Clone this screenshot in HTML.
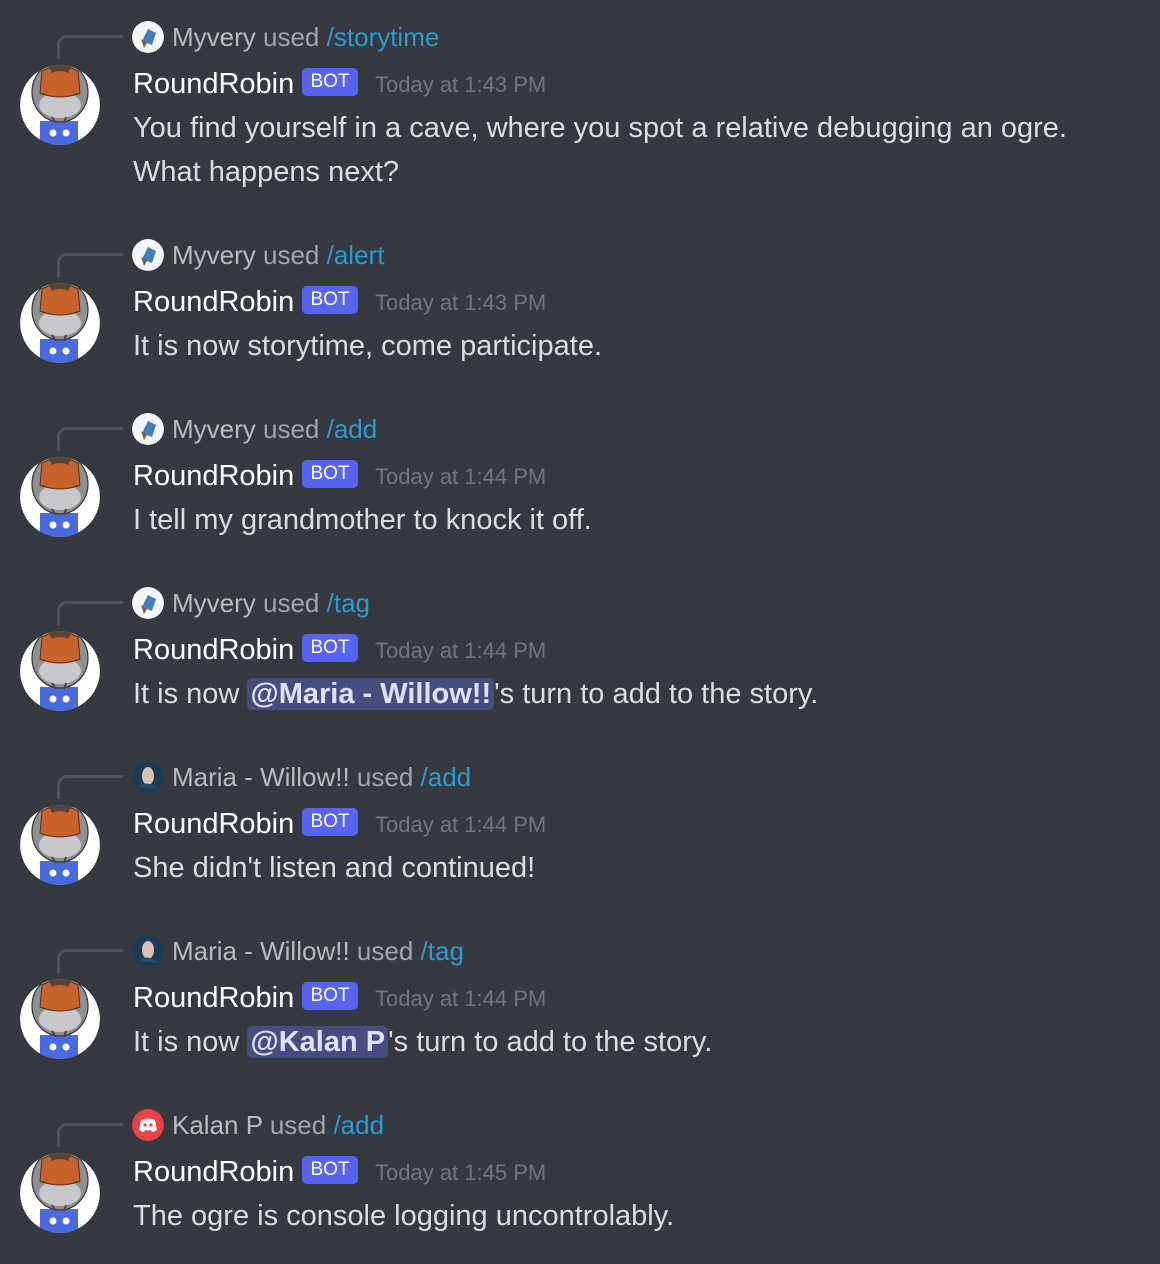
<!DOCTYPE html>
<html><head><meta charset="utf-8"><style>
body{margin:0;width:1160px;height:1264px;background:#36393f;overflow:hidden;position:relative;font-family:"Liberation Sans",sans-serif}
.b{position:absolute;left:0;width:1160px}
.sp{position:absolute;left:57px;top:-2px;width:66px;height:24px;border-left:3px solid #4f545c;border-top:3px solid #4f545c;border-top-left-radius:10px;box-sizing:border-box}
.sa{position:absolute;left:132px;top:-16px;width:32px;height:32px;border-radius:50%;overflow:hidden}
.rt{position:absolute;left:172px;top:-17px;font-size:26px;color:#b9bbbe;white-space:nowrap;line-height:34px}
.rt .c{color:#2c9bd0}
.rt .w{color:#a3a6aa}
.av{position:absolute;left:20px;top:28px;width:80px;height:80px;border-radius:50%;overflow:hidden}
.nm{position:absolute;left:133px;top:28px;font-size:29px;color:#fff;white-space:nowrap;line-height:38px}
.bot{position:absolute;left:302px;top:31px;width:56px;height:28px;background:#5865f2;border-radius:5px;color:#fff;font-size:19px;line-height:28px;text-align:center}
.ts{position:absolute;left:375px;top:33px;font-size:22px;color:#72767d;white-space:nowrap;line-height:30px}
.ct{position:absolute;left:133px;top:69px;font-size:29px;color:#dcddde;white-space:nowrap;line-height:44px}
.m{background:#484d80;color:#dee0fc;border-radius:5px;padding:0 3px;font-weight:bold;}
</style></head><body>

<svg width="0" height="0" style="position:absolute"><defs>
<clipPath id="cc"><circle cx="40" cy="40" r="40"/></clipPath>
<g id="rr"><g clip-path="url(#cc)">
<circle cx="40" cy="40" r="40" fill="#fff"/>
<rect x="20" y="56" width="38" height="26" fill="#4a6ae0"/>
<circle cx="33" cy="68" r="3.5" fill="#fff"/><circle cx="46" cy="68" r="3.5" fill="#fff"/>
<ellipse cx="40" cy="27" rx="28" ry="30" fill="#8e8f93" stroke="#333" stroke-width="1.2"/>
<ellipse cx="40" cy="40" rx="21" ry="13" fill="#c7c8cc"/>
<path d="M22 6 Q40 -4 58 6 L60 28 Q40 36 20 28 Z" fill="#c8622a" stroke="#5a2e18" stroke-width="1"/>
<path d="M28 0 L52 0 L48 8 Q40 4 32 8 Z" fill="#5b4237"/>
<path d="M32 52 L36 58 M46 52 L44 58" stroke="#5b4237" stroke-width="2"/>
</g></g>
<g id="my"><circle cx="16" cy="16" r="16" fill="#f3f5f7"/><path d="M10 20 L16 8 L24 12 L20 24 Z" fill="#3f7fbf"/><path d="M9 18 L15 22 L12 27Z" fill="#8a5a3a"/></g>
<g id="mw"><circle cx="16" cy="16" r="16" fill="#1c3a55"/><ellipse cx="16" cy="15" rx="6" ry="9" fill="#d9c0b0"/><path d="M6 26 Q16 18 26 28" fill="#234e70"/></g>
<g id="kp"><circle cx="16" cy="16" r="16" fill="#ed4245"/><path d="M9 11 Q16 8 23 11 L25 21 Q22 23 20 23 L19 21 Q16 22 13 21 L12 23 Q10 23 7 21 Z" fill="#fff"/><circle cx="13" cy="16" r="1.6" fill="#ed4245"/><circle cx="19" cy="16" r="1.6" fill="#ed4245"/></g>
</defs></svg>

<div class="b" style="top:37px"><div class="sp"></div><svg class="sa"><use href="#my"/></svg><div class="rt">Myvery <span class="w">used</span> <span class="c">/storytime</span></div>
<svg class="av" viewBox="0 0 80 80"><use href="#rr"/></svg><div class="nm">RoundRobin</div><div class="bot">BOT</div><div class="ts">Today at 1:43 PM</div>
<div class="ct">You find yourself in a cave, where you spot a relative debugging an ogre.<br>What happens next?</div></div>

<div class="b" style="top:255px"><div class="sp"></div><svg class="sa"><use href="#my"/></svg><div class="rt">Myvery <span class="w">used</span> <span class="c">/alert</span></div>
<svg class="av" viewBox="0 0 80 80"><use href="#rr"/></svg><div class="nm">RoundRobin</div><div class="bot">BOT</div><div class="ts">Today at 1:43 PM</div>
<div class="ct">It is now storytime, come participate.</div></div>

<div class="b" style="top:429px"><div class="sp"></div><svg class="sa"><use href="#my"/></svg><div class="rt">Myvery <span class="w">used</span> <span class="c">/add</span></div>
<svg class="av" viewBox="0 0 80 80"><use href="#rr"/></svg><div class="nm">RoundRobin</div><div class="bot">BOT</div><div class="ts">Today at 1:44 PM</div>
<div class="ct">I tell my grandmother to knock it off.</div></div>

<div class="b" style="top:603px"><div class="sp"></div><svg class="sa"><use href="#my"/></svg><div class="rt">Myvery <span class="w">used</span> <span class="c">/tag</span></div>
<svg class="av" viewBox="0 0 80 80"><use href="#rr"/></svg><div class="nm">RoundRobin</div><div class="bot">BOT</div><div class="ts">Today at 1:44 PM</div>
<div class="ct">It is now <span class="m">@Maria - Willow!!</span>'s turn to add to the story.</div></div>

<div class="b" style="top:777px"><div class="sp"></div><svg class="sa"><use href="#mw"/></svg><div class="rt">Maria - Willow!! <span class="w">used</span> <span class="c">/add</span></div>
<svg class="av" viewBox="0 0 80 80"><use href="#rr"/></svg><div class="nm">RoundRobin</div><div class="bot">BOT</div><div class="ts">Today at 1:44 PM</div>
<div class="ct">She didn't listen and continued!</div></div>

<div class="b" style="top:951px"><div class="sp"></div><svg class="sa"><use href="#mw"/></svg><div class="rt">Maria - Willow!! <span class="w">used</span> <span class="c">/tag</span></div>
<svg class="av" viewBox="0 0 80 80"><use href="#rr"/></svg><div class="nm">RoundRobin</div><div class="bot">BOT</div><div class="ts">Today at 1:44 PM</div>
<div class="ct">It is now <span class="m">@Kalan P</span>'s turn to add to the story.</div></div>

<div class="b" style="top:1125px"><div class="sp"></div><svg class="sa"><use href="#kp"/></svg><div class="rt">Kalan P <span class="w">used</span> <span class="c">/add</span></div>
<svg class="av" viewBox="0 0 80 80"><use href="#rr"/></svg><div class="nm">RoundRobin</div><div class="bot">BOT</div><div class="ts">Today at 1:45 PM</div>
<div class="ct">The ogre is console logging uncontrolably.</div></div>

</body></html>
